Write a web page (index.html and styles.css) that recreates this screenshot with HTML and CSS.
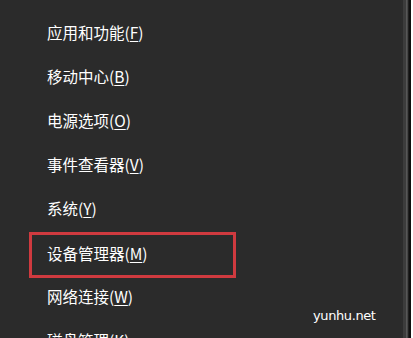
FILE: index.html
```html
<!DOCTYPE html>
<html lang="zh-CN">
<head>
<meta charset="utf-8">
<link rel="stylesheet" href="styles.css">
</head>
<body>
<div class="screen">
  <div class="menu">
    <div class="item">应用和功能(<u>F</u>)</div>
    <div class="item">移动中心(<u>B</u>)</div>
    <div class="item">电源选项(<u>O</u>)</div>
    <div class="item">事件查看器(<u>V</u>)</div>
    <div class="item">系统(<u>Y</u>)</div>
    <div class="item highlight"><span class="label">设备管理器(<u>M</u>)</span></div>
    <div class="item">网络连接(<u>W</u>)</div>
    <div class="item">磁盘管理(<u>K</u>)</div>
  </div>
  <div class="edge"></div>
  <div class="watermark">yunhu.net</div>
</div>
</body>
</html>
```

FILE: styles.css
```css
html, body {
  margin: 0;
  padding: 0;
  width: 413px;
  height: 338px;
  overflow: hidden;
  background: #2b2b2b;
}
.screen {
  position: relative;
  display: flex;
  width: 413px;
  height: 338px;
  overflow: hidden;
}
.menu {
  flex: 1;
  display: flex;
  flex-direction: column;
  padding-top: 10px;
  background: #2b2b2b;
}
.item {
  flex: none;
  height: 44px;
  line-height: 44px;
  margin-left: 30px;
  width: 205px;
  box-sizing: border-box;
  padding-left: 17px;
  color: #ffffff;
  font-family: "Noto Sans CJK SC", "Noto Sans", sans-serif;
  font-size: 15.5px;
  white-space: nowrap;
}
.item u {
  text-decoration-thickness: 1px;
  text-underline-offset: 2px;
}
.highlight {
  outline: 3px solid #cf3a3f;
  outline-offset: -2px;
  transform: translateY(3px);
}
.highlight .label {
  position: relative;
  top: -2px;
}
.edge {
  flex: none;
  width: 12px;
  background: linear-gradient(to right,
    #2c2c2c 0px, #2c2c2c 2px,
    #3c3c3c 2px, #3c3c3c 5px,
    #575757 5px, #575757 6px,
    #454545 6px, #454545 7px,
    #202020 7px, #202020 8px,
    #101010 8px, #101010 10px,
    #ffffff 10px, #ffffff 12px);
}
.watermark {
  position: absolute;
  left: 313px;
  top: 308px;
  color: #ffffff;
  font-family: "DejaVu Sans", sans-serif;
  font-size: 13px;
  letter-spacing: -0.4px;
}
```
